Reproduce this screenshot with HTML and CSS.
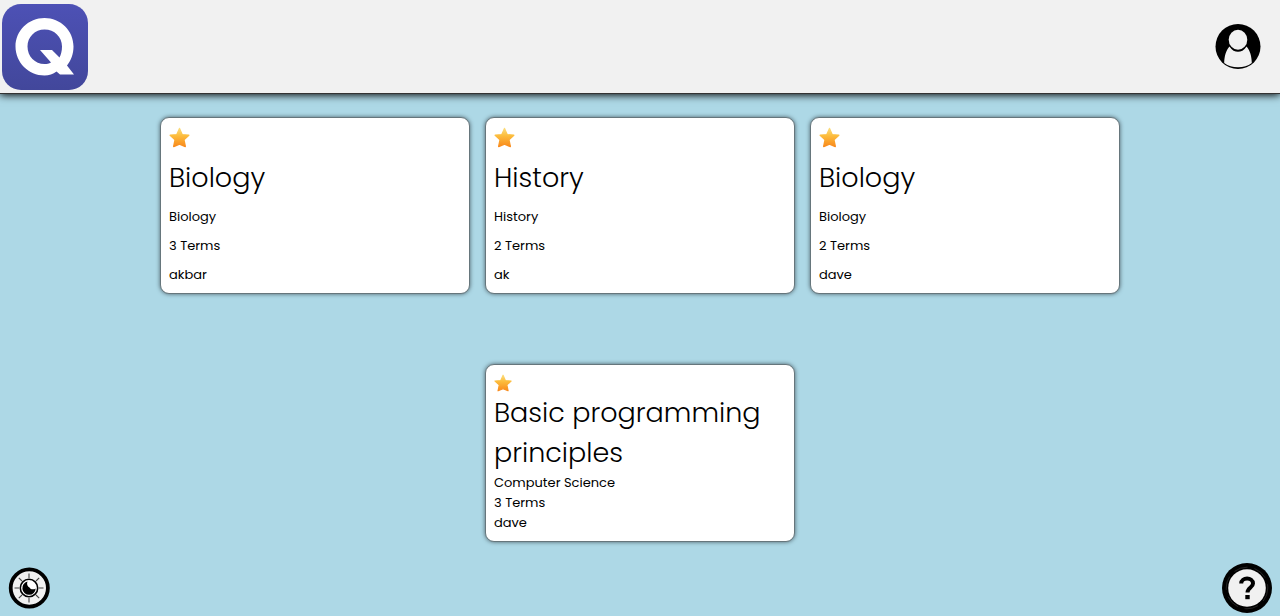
FILE: index.html
```html
<!DOCTYPE html>
<html lang="en">
<head>
<meta charset="utf-8">
<meta name="viewport" content="width=device-width, initial-scale=1">
<title>Study sets</title>
<link rel="stylesheet" href="styles.css">
</head>
<body>
<svg class="defs" aria-hidden="true">
  <defs>
    <linearGradient id="gold" x1="0" y1="0" x2="0" y2="1">
      <stop offset="0" stop-color="#fbdc7c"/>
      <stop offset=".4" stop-color="#fcbd3d"/>
      <stop offset="1" stop-color="#f98a1c"/>
    </linearGradient>
    <symbol id="star" viewBox="0 0 22 22">
      <path d="M10.500 2 13.100 8.100 19.800 8.700 14.900 13.200 16.300 20 10.500 17.500 4.700 20 6.100 13.200 1.200 8.700 7.900 8.100Z" fill="url(#gold)" stroke="url(#gold)" stroke-width="1.400" stroke-linejoin="round"/>
    </symbol>
  </defs>
</svg>
<header class="topbar">
  <a class="logo" href="#" aria-label="Home">
    <svg viewBox="0 0 86 86" aria-hidden="true">
      <defs>
        <linearGradient id="indigo" x1="0" y1="0" x2="0" y2="1">
          <stop offset="0" stop-color="#4d51b5"/>
          <stop offset="1" stop-color="#42479b"/>
        </linearGradient>
      </defs>
      <rect width="86" height="86" rx="19" fill="url(#indigo)"/>
      <path fill="#fff" fill-rule="evenodd" d="M42.500 14C58.500 14 71.500 26.500 71.500 42.500C71.500 50 69 56.500 65 61.500L72 70.500H58L54.500 67.500C51 70 47 71.500 42.500 71.500C26.500 71.500 13.500 58.500 13.500 42.500C13.500 26.500 26.500 14 42.500 14ZM42.500 25.500C33 25.500 25.500 33 25.500 42.500C25.500 52.500 33 60 42.500 60C45 60 47 59.500 49 58.500L38 46H50L57.500 53.500C59 50.500 60 47 60 42.500C60 33 52.500 25.500 42.500 25.500Z"/>
    </svg>
  </a>
  <button class="icon-button account" type="button" aria-label="Account">
    <svg viewBox="0 0 46 46" aria-hidden="true">
      <circle cx="23" cy="22.500" r="22.500"/>
      <path d="M14.500 22.500C17 26.500 20 27.800 23 27.800S29 26.500 31.500 22.500C35 26 36.800 33 36.800 39Q31 43.300 23 43.300T9.200 39C9.200 33 11 26 14.500 22.500Z" fill="#f1f1f1"/>
      <ellipse cx="23" cy="15.800" rx="9.300" ry="10" fill="#f1f1f1"/>
    </svg>
  </button>
</header>
<main class="sets">
  <article class="card">
    <button class="star" type="button" aria-label="Favourite"><svg aria-hidden="true"><use href="#star"/></svg></button>
    <h2>Biology</h2><p>Biology</p><p>3 Terms</p><p>akbar</p>
  </article>
  <article class="card">
    <button class="star" type="button" aria-label="Favourite"><svg aria-hidden="true"><use href="#star"/></svg></button>
    <h2>History</h2><p>History</p><p>2 Terms</p><p>ak</p>
  </article>
  <article class="card">
    <button class="star" type="button" aria-label="Favourite"><svg aria-hidden="true"><use href="#star"/></svg></button>
    <h2>Biology</h2><p>Biology</p><p>2 Terms</p><p>dave</p>
  </article>
  <article class="card compact">
    <button class="star" type="button" aria-label="Favourite"><svg aria-hidden="true"><use href="#star"/></svg></button>
    <h2>Basic programming principles</h2><p>Computer Science</p><p>3 Terms</p><p>dave</p>
  </article>
</main>
<footer class="tools">
  <button class="icon-button theme" type="button" aria-label="Toggle theme">
    <svg viewBox="0 0 42 42" aria-hidden="true">
      <circle cx="21.300" cy="21" r="18.600" fill="#f1f1f1" stroke="#000" stroke-width="3.800"/>
      <g stroke="#444" stroke-width="1.100">
        <path d="M21 6.500V11M21 31V35.500M6.500 21H11M31 21H35.500M10.800 10.800 14 14M28 28 31.200 31.200M31.200 10.800 28 14M14 28 10.800 31.200"/>
      </g>
      <circle cx="21" cy="21" r="8.700" fill="#fff" stroke="#000" stroke-width="1.600"/>
      <path d="M19.500 14.600A6.700 6.700 0 1 0 27.700 21.500C25.500 23 22.500 22.500 21.500 20.500C19.300 19.500 18.500 17 19.500 14.600Z"/>
    </svg>
  </button>
  <button class="icon-button help" type="button" aria-label="Help">
    <svg viewBox="0 0 50 50" aria-hidden="true">
      <circle cx="25" cy="25" r="25"/>
      <circle cx="25" cy="25" r="20.800" fill="none" stroke="#333" stroke-width=".7" stroke-dasharray="14 7"/>
      <circle cx="25" cy="25" r="18.800" fill="#f1f1f1"/>
      <path d="M19.200 20.500C19.200 13.800 31 13.800 31 20.500C31 24.500 25.500 24.500 25.500 29.500" fill="none" stroke="#000" stroke-width="4"/>
      <rect x="23.300" y="32" width="4.400" height="4.200"/>
    </svg>
  </button>
</footer>
</body>
</html>
```
FILE: styles.css
```css
* {
  box-sizing: border-box;
}

body {
  margin: 0;
  min-height: 100vh;
  display: flex;
  flex-direction: column;
  background: #add8e6;
  color: #000;
  font: 13px/20px Poppins, Inter, sans-serif;
}

button {
  padding: 0;
  border: 0;
  background: none;
  cursor: pointer;
}

svg {
  display: block;
  width: 100%;
  height: 100%;
}

.defs {
  position: absolute;
  width: 0;
  height: 0;
}

.topbar {
  display: flex;
  align-items: center;
  justify-content: space-between;
  padding: 4px 19px 3px 2px;
  background: #f1f1f1;
  border-bottom: 1px solid #333;
  box-shadow: 0 1px 8px #000;
}

.logo {
  width: 86px;
  height: 86px;
}

.account {
  width: 46px;
  height: 46px;
}

.sets {
  flex: 1;
  display: flex;
  flex-wrap: wrap;
  justify-content: center;
  align-content: flex-start;
  gap: 70px 15px;
  padding: 23px 32px;
}

.card {
  width: 310px;
  display: flex;
  flex-direction: column;
  gap: 9px;
  padding: 8px;
  background: #fff;
  border: 1px solid #66767c;
  border-radius: 9px;
  box-shadow: 0 0 4px #4c6068;
}

.compact {
  gap: 0;
}

.star {
  width: 22px;
  height: 23px;
}

.compact .star {
  width: 19px;
  height: 20px;
}

.card h2,
.card p {
  margin: 0;
}

.card h2 {
  font-size: 27px;
  font-weight: 300;
  line-height: 40px;
}

.tools {
  position: fixed;
  right: 8px;
  bottom: 3px;
  left: 8px;
  display: flex;
  align-items: center;
  justify-content: space-between;
}

.theme {
  width: 42px;
  height: 42px;
}

.help {
  width: 50px;
  height: 50px;
}
```
